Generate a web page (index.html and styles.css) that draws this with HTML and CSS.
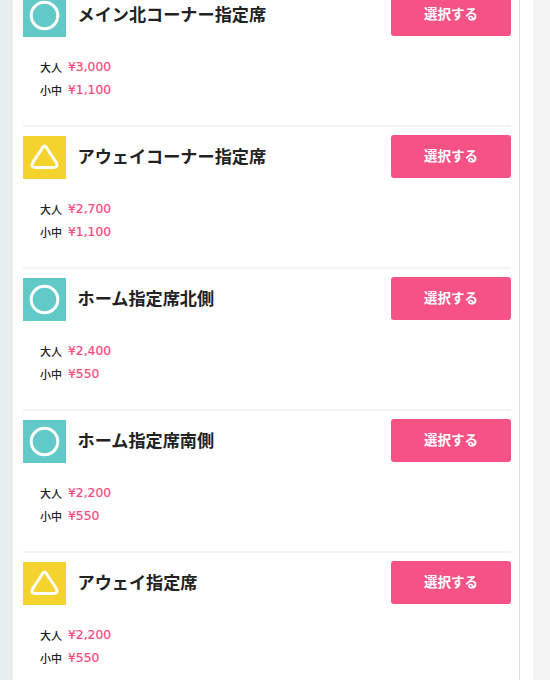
FILE: index.html
```html
<!DOCTYPE html>
<html lang="ja">
<head>
    <meta charset="UTF-8">
    <title>席種選択</title>
    <link rel="stylesheet" href="styles.css">
</head>
<body>
    <div class="page">
        <div class="panel">
            <section class="seat">
                <div class="seat-head">
                    <span class="mark mark-circle"><svg viewBox="0 0 43 43"><circle cx="21.5" cy="21.5" r="13.3"/></svg></span>
                    <h2 class="seat-name">メイン北コーナー指定席</h2>
                    <button class="select-button">選択する</button>
                </div>
                <dl class="prices">
                    <div class="price-row"><dt>大人</dt><dd>¥3,000</dd></div>
                    <div class="price-row"><dt>小中</dt><dd>¥1,100</dd></div>
                </dl>
            </section>
            <section class="seat">
                <div class="seat-head">
                    <span class="mark mark-triangle"><svg viewBox="0 0 43 43"><path d="M19.8 11.2 Q21.5 8.8 23.2 11.2 L33.2 26.5 Q35.5 31.5 31 31.5 L12 31.5 Q7.5 31.5 9.8 26.5 Z"/></svg></span>
                    <h2 class="seat-name">アウェイコーナー指定席</h2>
                    <button class="select-button">選択する</button>
                </div>
                <dl class="prices">
                    <div class="price-row"><dt>大人</dt><dd>¥2,700</dd></div>
                    <div class="price-row"><dt>小中</dt><dd>¥1,100</dd></div>
                </dl>
            </section>
            <section class="seat">
                <div class="seat-head">
                    <span class="mark mark-circle"><svg viewBox="0 0 43 43"><circle cx="21.5" cy="21.5" r="13.3"/></svg></span>
                    <h2 class="seat-name">ホーム指定席北側</h2>
                    <button class="select-button">選択する</button>
                </div>
                <dl class="prices">
                    <div class="price-row"><dt>大人</dt><dd>¥2,400</dd></div>
                    <div class="price-row"><dt>小中</dt><dd>¥550</dd></div>
                </dl>
            </section>
            <section class="seat">
                <div class="seat-head">
                    <span class="mark mark-circle"><svg viewBox="0 0 43 43"><circle cx="21.5" cy="21.5" r="13.3"/></svg></span>
                    <h2 class="seat-name">ホーム指定席南側</h2>
                    <button class="select-button">選択する</button>
                </div>
                <dl class="prices">
                    <div class="price-row"><dt>大人</dt><dd>¥2,200</dd></div>
                    <div class="price-row"><dt>小中</dt><dd>¥550</dd></div>
                </dl>
            </section>
            <section class="seat">
                <div class="seat-head">
                    <span class="mark mark-triangle"><svg viewBox="0 0 43 43"><path d="M19.8 11.2 Q21.5 8.8 23.2 11.2 L33.2 26.5 Q35.5 31.5 31 31.5 L12 31.5 Q7.5 31.5 9.8 26.5 Z"/></svg></span>
                    <h2 class="seat-name">アウェイ指定席</h2>
                    <button class="select-button">選択する</button>
                </div>
                <dl class="prices">
                    <div class="price-row"><dt>大人</dt><dd>¥2,200</dd></div>
                    <div class="price-row"><dt>小中</dt><dd>¥550</dd></div>
                </dl>
            </section>
        </div>
    </div>
</body>
</html>
```
FILE: styles.css
```css
html, body {
    margin: 0;
    padding: 0;
    height: 680px;
    overflow: hidden;
}

body {
    font-family: "DejaVu Sans", "Noto Sans CJK JP", sans-serif;
    color: #222;
    background-color: #f3f3f3;
}

.page {
    width: 533px;
    height: 680px;
    overflow: hidden;
    background-color: #fff;
    border-left: 13px solid #e8eeee;
    box-sizing: border-box;
}

.panel {
    width: 507px;
    box-sizing: border-box;
    margin-top: -7px;
    padding: 0 8px 0 10px;
    border-right: 1px solid #d9dfdf;
}

.seat {
    box-sizing: border-box;
    height: 134px;
    border-bottom: 2px solid #f3f3f3;
}

.seat + .seat {
    height: 142px;
    padding-top: 8px;
}

.seat:last-child {
    height: 135px;
    border-bottom: none;
}

.seat-head {
    display: flex;
    align-items: center;
}

.mark {
    width: 43px;
    height: 43px;
    flex: none;
}

.mark svg {
    display: block;
    width: 43px;
    height: 43px;
    fill: none;
    stroke: #fff;
    stroke-width: 3px;
    stroke-linejoin: round;
}

.mark-circle { background-color: #62c9c9; }
.mark-triangle { background-color: #f5d32e; }

.seat-name {
    flex: 1;
    margin: 0 0 5px 11.5px;
    font-size: 17.15px;
    font-weight: bold;
    font-family: "Noto Sans CJK JP", sans-serif;
}

.select-button {
    width: 120px;
    height: 43px;
    margin-bottom: 2px;
    padding: 0 0 4px;
    border: none;
    border-radius: 3px;
    background-color: #f65285;
    color: #fff;
    font-family: "Noto Sans CJK JP", sans-serif;
    font-size: 13.5px;
    font-weight: bold;
}

.prices {
    margin: 17px 0 0 17px;
}

.price-row {
    display: flex;
    align-items: center;
    height: 23px;
    gap: 6px;
}

.price-row dt {
    font-size: 11px;
    font-weight: 500;
    font-family: "Noto Sans CJK JP", sans-serif;
}

.price-row dd {
    margin: 0;
    font-size: 12.3px;
    color: #f5487d;
    -webkit-text-stroke: 0.2px #f5487d;
}
```
